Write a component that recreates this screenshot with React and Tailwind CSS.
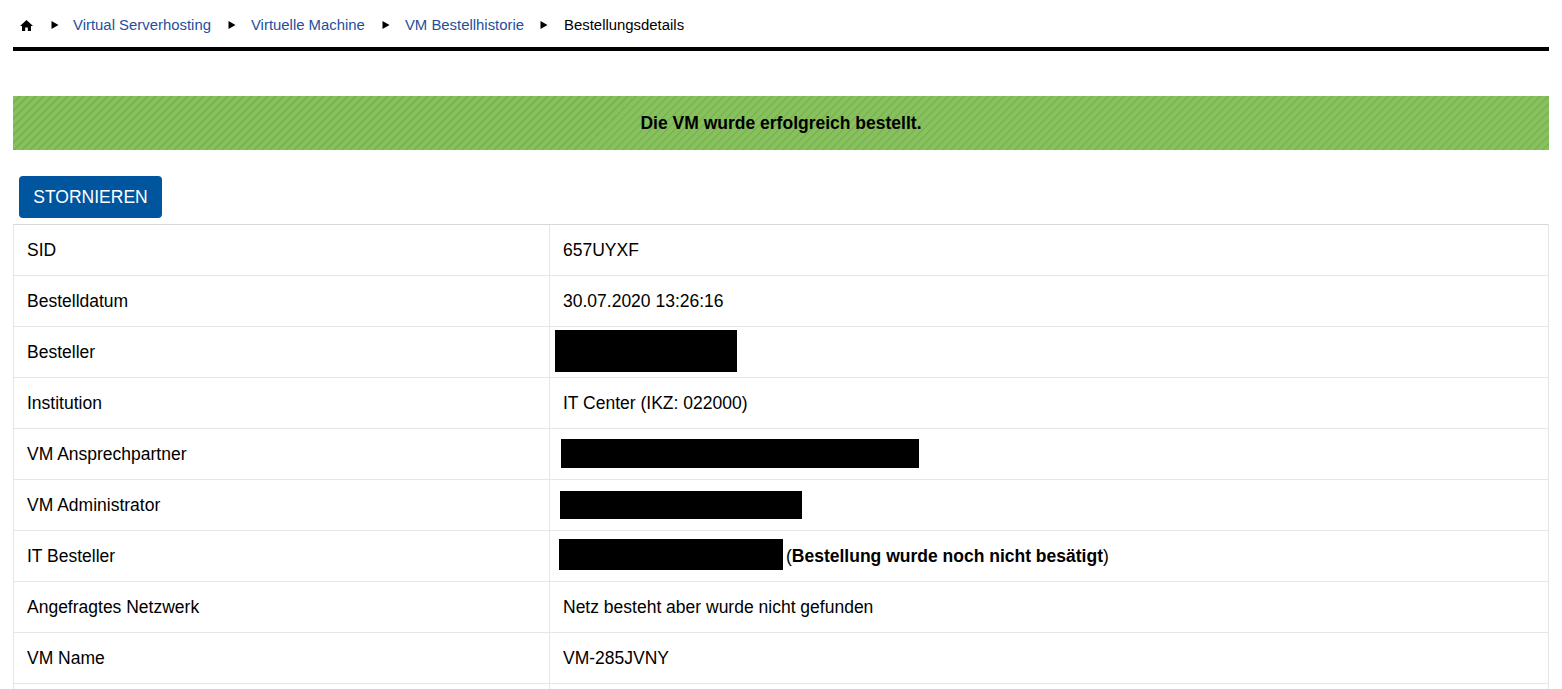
const crumbs = ['Virtual Serverhosting', 'Virtuelle Machine', 'VM Bestellhistorie']

const rows = [
  { label: 'SID', value: '657UYXF' },
  { label: 'Bestelldatum', value: '30.07.2020 13:26:16' },
  { label: 'Besteller', value: <div className="-mt-0.5 -ml-2 h-[42px] w-[182px] bg-black" /> },
  { label: 'Institution', value: 'IT Center (IKZ: 022000)' },
  { label: 'VM Ansprechpartner', value: <div className="-mt-0.5 -ml-0.5 h-[29px] w-[358px] bg-black" /> },
  { label: 'VM Administrator', value: <div className="-ml-[3px] h-[28px] w-[242px] bg-black" /> },
  {
    label: 'IT Besteller',
    value: (
      <div className="-ml-1 flex items-center">
        <div className="-mt-1 h-[31px] w-[224px] bg-black" />
        <span className="ml-[3px]">
          (<b>Bestellung wurde noch nicht besätigt</b>)
        </span>
      </div>
    ),
  },
  { label: 'Angefragtes Netzwerk', value: 'Netz besteht aber wurde nicht gefunden' },
  { label: 'VM Name', value: 'VM-285JVNY' },
  { label: '', value: '' },
]

function Arrow() {
  return (
    <svg className="h-2 w-2" viewBox="0 0 8 8">
      <path d="M0.5 0l7 4-7 4z" fill="#000" />
    </svg>
  )
}

function Breadcrumb() {
  return (
    <nav className="flex h-[47px] items-center pt-[3px] text-[14.9px]">
      <svg className="ml-[7px] h-[13px] w-[13px]" viewBox="0 0 13 13">
        <path d="M6.5 1L0 7h2v5h3.2V8.5h2.6V12H11V7h2z" fill="#000" />
      </svg>
      {crumbs.map((c, i) => (
        <div key={c} className="flex items-center">
          <div className={i === 0 ? 'ml-[18px] mr-[14px]' : 'ml-[17px] mr-[15px]'}>
            <Arrow />
          </div>
          <a className="text-[#1f4f9c]">{c}</a>
        </div>
      ))}
      <div className="ml-4 mr-4">
        <Arrow />
      </div>
      <span className="text-black">Bestellungsdetails</span>
    </nav>
  )
}

export default function App() {
  return (
    <div className="h-[689px] overflow-hidden bg-white px-[13px] font-['Liberation_Sans',Arial,sans-serif] text-black">
      <Breadcrumb />
      <div className="h-1 bg-black" />

      {/* Success message */}
      <div className="mt-[45px] flex h-[54px] items-center justify-center bg-[#86bf5c] bg-[repeating-linear-gradient(135deg,#88c05d_0,#88c05d_4px,#79b452_4px,#79b452_5.66px)] text-[17.5px] font-bold">
        Die VM wurde erfolgreich bestellt.
      </div>

      <button className="mt-[26px] ml-1.5 block h-[42px] w-[143px] rounded bg-[#00559f] text-[17.5px] text-white">
        STORNIEREN
      </button>

      <div className="mt-1.5 border-x border-t border-x-[#e6e6e6] border-t-[#d8d8d8]">
        {rows.map((r) => (
          <div key={r.label} className="grid h-[51px] grid-cols-[536px_1fr] border-b border-[#e6e6e6] text-[17.5px]">
            <div className="flex items-center border-r border-[#e6e6e6] pl-[13px]">{r.label}</div>
            <div className="flex items-center pl-[13px]">{r.value}</div>
          </div>
        ))}
      </div>
    </div>
  )
}
